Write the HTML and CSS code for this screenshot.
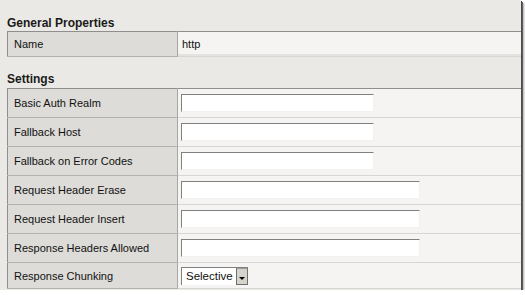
FILE: index.html
```html
<!DOCTYPE html>
<html lang="en">
<head>
    <meta charset="UTF-8">
    <title>Properties</title>
    <link rel="stylesheet" href="styles.css">
</head>
<body>
    <div class="shot">
        <h3 class="section-title">General Properties</h3>
        <table class="props general">
            <tr>
                <td class="label">Name</td>
                <td class="value"><span class="value-text">http</span></td>
            </tr>
        </table>

        <h3 class="section-title">Settings</h3>
        <table class="props settings">
            <tr>
                <td class="label">Basic Auth Realm</td>
                <td class="value"><input type="text" class="field"></td>
            </tr>
            <tr>
                <td class="label">Fallback Host</td>
                <td class="value"><input type="text" class="field"></td>
            </tr>
            <tr>
                <td class="label">Fallback on Error Codes</td>
                <td class="value"><input type="text" class="field"></td>
            </tr>
            <tr>
                <td class="label">Request Header Erase</td>
                <td class="value"><input type="text" class="field wide"></td>
            </tr>
            <tr>
                <td class="label">Request Header Insert</td>
                <td class="value"><input type="text" class="field wide"></td>
            </tr>
            <tr>
                <td class="label">Response Headers Allowed</td>
                <td class="value"><input type="text" class="field wide"></td>
            </tr>
            <tr class="last-row">
                <td class="label">Response Chunking</td>
                <td class="value">
                    <div class="dropdown">
                        <span class="dropdown-text">Selective</span>
                        <span class="dropdown-btn"><span class="arrow"></span></span>
                    </div>
                </td>
            </tr>
        </table>
    </div>
</body>
</html>
```

FILE: styles.css
```css
:root {
    --page-bg: #eae9e5;
    --label-bg: #dddcd8;
    --value-bg: #f5f4f2;
    --outer-border: #8e8e8e;
    --label-line: #b3b1ab;
    --value-line: #d8d6d2;
    --text: #111111;
}

* {
    box-sizing: border-box;
}

body {
    margin: 0;
    background: #ffffff;
    font-family: "Liberation Sans", Arial, sans-serif;
    font-size: 11px;
    color: var(--text);
}

.shot {
    width: 521px;
    height: 290px;
    padding: 16px 0 0 7px;
    background: var(--page-bg);
    overflow: hidden;
    box-shadow: 1px 1px 0 #4a4a4a, 2px 2px 0 #5e5e5e, 3px 3px 2px rgba(0, 0, 0, 0.35);
}

.section-title {
    margin: 0 0 1px;
    font-size: 12px;
    line-height: 14px;
    font-weight: bold;
    color: #1a1a1a;
}

.props + .section-title {
    margin-top: 15px;
    margin-bottom: 2px;
}

.props {
    width: 520px;
    border-collapse: collapse;
    border: 1px solid var(--outer-border);
}

.props td {
    padding: 0;
    vertical-align: middle;
}

.label {
    width: 170px;
    padding-left: 6px !important;
    background: var(--label-bg);
    border-right: 1px solid #a7a6a2;
    border-bottom: 1px solid var(--label-line);
}

.value {
    padding-left: 3px !important;
    background: var(--value-bg);
    border-bottom: 1px solid var(--value-line);
}

.general td {
    height: 25px;
}

.general .value {
    box-shadow: inset 0 -2px 0 #e4e3e0;
}

.value-text {
    padding-left: 1px;
}

.settings td {
    height: 29px;
}

.settings .last-row td {
    height: 26px;
}

.field {
    display: block;
    width: 193px;
    height: 18px;
    margin: 0;
    padding: 0 2px;
    background: #ffffff;
    border: 1px solid;
    border-color: #808080 #f2f1ef #f2f1ef #808080;
    font: inherit;
    outline: none;
}

.field.wide {
    width: 239px;
}

.dropdown {
    display: flex;
    align-items: stretch;
    width: 67px;
    height: 18px;
    background: #ffffff;
    border-top: 1px solid #808080;
    border-left: 1px solid #808080;
}

.dropdown-text {
    flex: 1;
    padding-left: 4px;
    line-height: 17px;
    font-size: 11.5px;
}

.dropdown-btn {
    position: relative;
    width: 12px;
    background: #d6d3cc;
    border: 1px solid #6f6f6f;
    border-top-color: #9a9a9a;
}

.arrow {
    position: absolute;
    left: 2px;
    bottom: 4px;
    border-left: 3px solid transparent;
    border-right: 3px solid transparent;
    border-top: 3px solid #000000;
}
```
